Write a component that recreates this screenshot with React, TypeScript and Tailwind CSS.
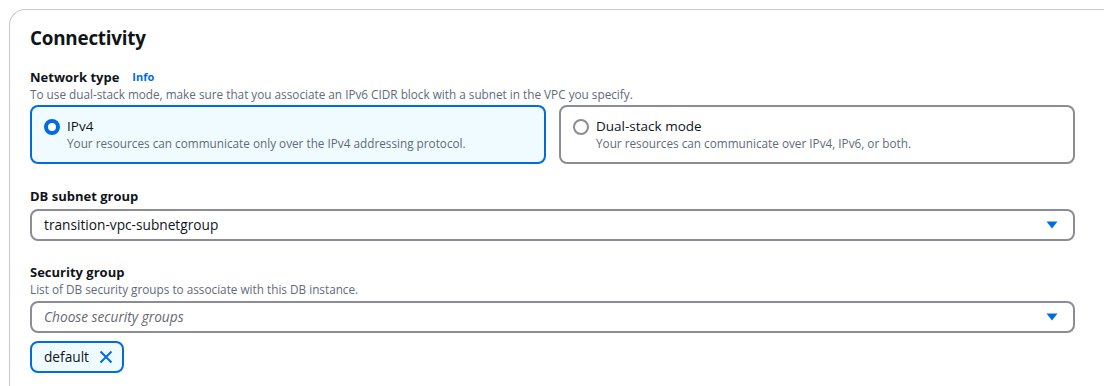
import React from "react";

function Caret() {
  return (
    <svg width="12" height="8" viewBox="0 0 12 8" className="shrink-0">
      <path d="M0.5 0.5 H11.5 L6 7.5 Z" fill="#006ce0" />
    </svg>
  );
}

function RadioCard({
  checked,
  title,
  desc,
}: {
  checked: boolean;
  title: string;
  desc: string;
}) {
  return (
    <div
      className={
        checked
          ? "flex-1 h-[59px] rounded-[8px] border-2 border-[#006ce0] bg-[#f0fbff] flex items-start pl-[12px] pt-[10px] gap-[7px]"
          : "flex-1 h-[59px] rounded-[8px] border-2 border-[#8c8c94] bg-white flex items-start pl-[12px] pt-[10px] gap-[7px]"
      }
    >
      <div className="pt-[2px]">
        {checked ? (
          <div className="w-[16px] h-[16px] rounded-full border-[4px] border-[#006ce0] bg-white" />
        ) : (
          <div className="w-[16px] h-[16px] rounded-full border-2 border-[#8c8c94] bg-white" />
        )}
      </div>
      <div className="flex flex-col">
        <span className="text-[13.5px] leading-[18px] text-[#0f141a]">{title}</span>
        <span className="text-[11.75px] leading-[16px] text-[#5f6b7a]">{desc}</span>
      </div>
    </div>
  );
}

export default function App() {
  return (
    <div
      className="w-[1104px] h-[386px] overflow-hidden bg-white pl-[9px] pt-[9px]"
      style={{ fontFamily: '"Open Sans", "Noto Sans", sans-serif' }}
    >
      <div className="w-[1120px] h-[400px] rounded-tl-[16px] border-l border-t border-[#c6c6cd] pl-[20px] pt-[15px] pr-[45px]">
        <h2 className="text-[18.8px] leading-[26px] font-bold text-[#0f141a] tracking-[-0.2px]">
          Connectivity
        </h2>

        <div className="mt-[17px] flex items-center gap-[13px]">
          <span className="text-[13px] leading-[18px] font-bold text-[#0f141a]">Network type</span>
          <span className="text-[11px] leading-[18px] font-bold text-[#006ce0]">Info</span>
        </div>
        <div className="text-[11.75px] leading-[16px] text-[#5f6b7a]">
          To use dual-stack mode, make sure that you associate an IPv6 CIDR block with a subnet in the VPC you specify.
        </div>
        <div className="mt-[3px] flex gap-[13px] w-[1045px]">
          <RadioCard
            checked
            title="IPv4"
            desc="Your resources can communicate only over the IPv4 addressing protocol."
          />
          <RadioCard
            checked={false}
            title="Dual-stack mode"
            desc="Your resources can communicate over IPv4, IPv6, or both."
          />
        </div>

        <div className="mt-[23px] text-[13px] leading-[18px] font-bold text-[#0f141a]">
          DB subnet group
        </div>
        <div className="mt-[4px] w-[1045px] h-[32px] rounded-[8px] border-2 border-[#8c8c94] flex items-center justify-between pl-[12px] pr-[15px]">
          <span className="text-[13.7px] text-[#0f141a]">transition-vpc-subnetgroup</span>
          <Caret />
        </div>

        <div className="mt-[22px] text-[13px] leading-[18px] font-bold text-[#0f141a]">
          Security group
        </div>
        <div className="text-[11.75px] leading-[16px] text-[#5f6b7a]">
          List of DB security groups to associate with this DB instance.
        </div>
        <div className="mt-[4px] w-[1045px] h-[32px] rounded-[8px] border-2 border-[#8c8c94] flex items-center justify-between pl-[12px] pr-[15px]">
          <span className="text-[13.7px] italic text-[#656871]">Choose security groups</span>
          <Caret />
        </div>
        <div className="mt-[8px] inline-flex items-center h-[32px] rounded-[8px] border-2 border-[#006ce0] bg-[#f0fbff] pl-[12px] pr-[9px] gap-[10px]">
          <span className="text-[13.7px] text-[#0f141a]">default</span>
          <svg width="14" height="14" viewBox="0 0 14 14">
            <path d="M1.5 1.5 L12.5 12.5 M12.5 1.5 L1.5 12.5" stroke="#006ce0" strokeWidth="2" fill="none" />
          </svg>
        </div>
      </div>
    </div>
  );
}
